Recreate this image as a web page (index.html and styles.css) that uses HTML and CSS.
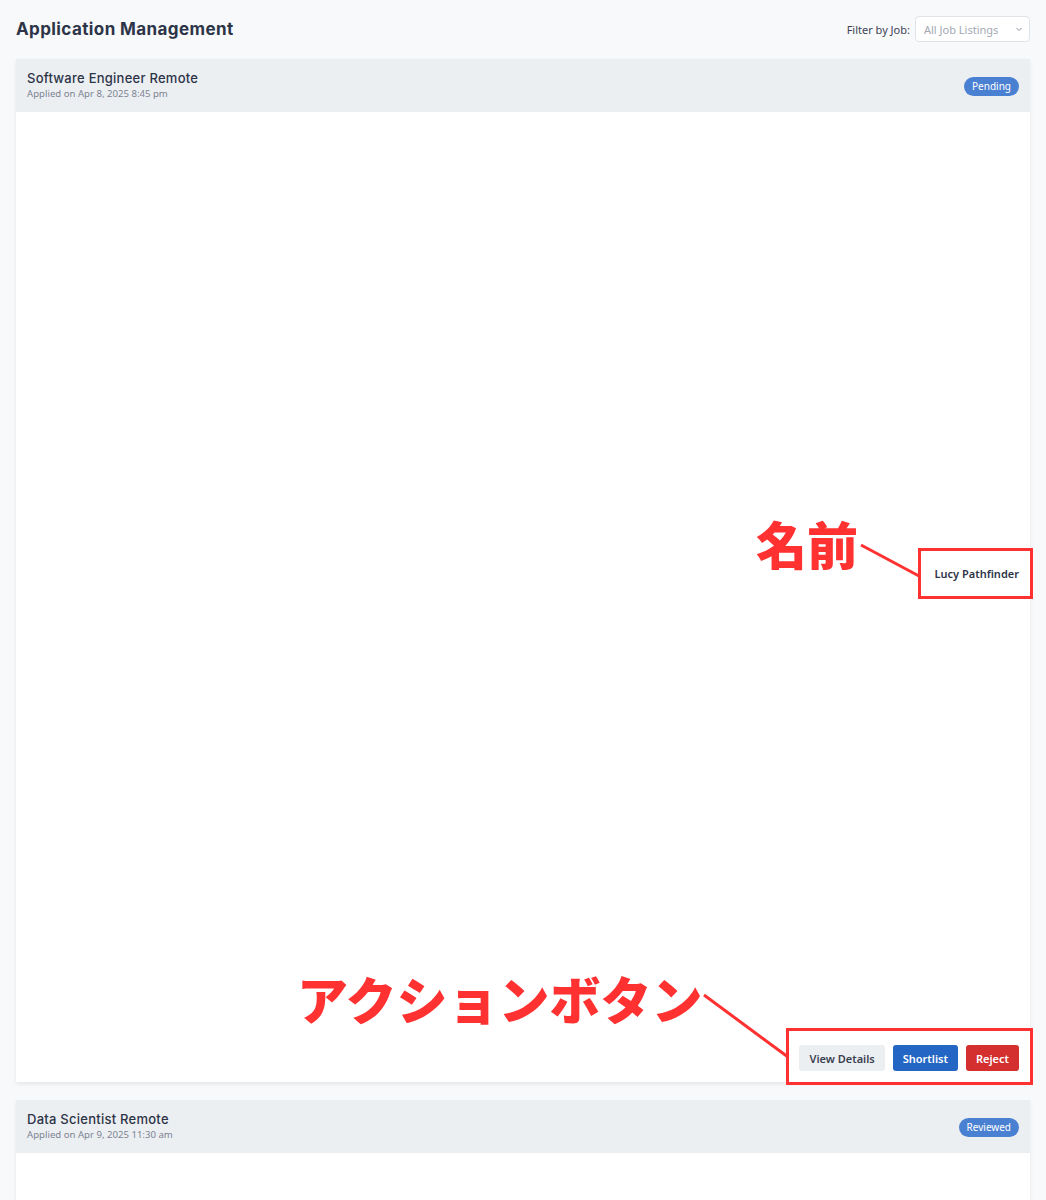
FILE: index.html
```html
<!DOCTYPE html>
<html lang="en">
<head>
    <meta charset="UTF-8">
    <meta name="viewport" content="width=device-width, initial-scale=1.0">
    <title>Application Management</title>
    <link rel="stylesheet" href="styles.css">
</head>
<body>

    <div class="page">
        <div class="top-bar">
            <h1>Application Management</h1>
            <div class="filter">
                <label for="jobFilter">Filter by Job:</label>
                <div class="select-box" id="jobFilter">
                    <span>All Job Listings</span>
                    <svg width="8" height="8" viewBox="0 0 8 8"><path d="M1.5 3l2.5 2.5L6.5 3" fill="none" stroke="#8a909c" stroke-width="1"/></svg>
                </div>
            </div>
        </div>

        <div class="app-card">
            <div class="card-header">
                <div>
                    <div class="job-title">Software Engineer Remote</div>
                    <div class="applied">Applied on Apr 8, 2025 8:45 pm</div>
                </div>
                <span class="badge">Pending</span>
            </div>
            <div class="card-body">
                <div class="applicant">
                    <span class="applicant-name">Lucy Pathfinder</span>
                </div>
                <div class="actions">
                    <button class="btn btn-light">View Details</button>
                    <button class="btn btn-blue">Shortlist</button>
                    <button class="btn btn-red">Reject</button>
                </div>
            </div>
        </div>

        <div class="app-card">
            <div class="card-header">
                <div>
                    <div class="job-title">Data Scientist Remote</div>
                    <div class="applied">Applied on Apr 9, 2025 11:30 am</div>
                </div>
                <span class="badge">Reviewed</span>
            </div>
            <div class="card-body short"></div>
        </div>
    </div>

    <!-- annotations -->
    <div class="note note-name">名前</div>
    <div class="note note-actions">アクションボタン</div>
    <div class="mark mark-name"></div>
    <div class="mark mark-actions"></div>
    <svg class="note-lines" width="1046" height="1200" viewBox="0 0 1046 1200">
        <line x1="861" y1="545" x2="919" y2="576" stroke="#ff3131" stroke-width="3"/>
        <line x1="704" y1="995" x2="788" y2="1057" stroke="#ff3131" stroke-width="3"/>
    </svg>

</body>
</html>
```

FILE: styles.css
```css
body {
    font-family: 'Noto Sans', 'Open Sans', sans-serif;
    background-color: #f8f9fb;
    color: #2d3448;
    margin: 0;
    padding: 0;
}
.page {
    padding: 16px 16px 0;
}
.top-bar {
    display: flex;
    justify-content: space-between;
    align-items: center;
    margin-bottom: 17px;
}
h1 {
    font-family: 'Inter', sans-serif;
    font-size: 17px;
    font-weight: 700;
    letter-spacing: 0.4px;
    margin: 0;
    color: #2d3448;
}
.filter {
    display: flex;
    align-items: center;
    gap: 5px;
}
.filter label {
    font-size: 11px;
    color: #3d4454;
}
.select-box {
    width: 115px;
    height: 26px;
    box-sizing: border-box;
    border: 1px solid #e0e3e8;
    border-radius: 4px;
    background-color: #ffffff;
    display: flex;
    justify-content: space-between;
    align-items: center;
    padding: 0 6px 0 8px;
    font-size: 11px;
    color: #a3a8b2;
}
.app-card {
    background-color: #ffffff;
    box-shadow: 0 2px 4px rgba(0, 0, 0, 0.08);
    margin-bottom: 18px;
}
.card-header {
    background-color: #eceff2;
    display: flex;
    justify-content: space-between;
    align-items: center;
    padding: 12px 11px 11px;
    height: 30px;
}
.job-title {
    font-family: 'Inter', sans-serif;
    font-size: 13px;
    font-weight: 500;
    letter-spacing: 0.25px;
    color: #2d3448;
    line-height: 16px;
}
.applied {
    font-size: 9.6px;
    color: #7c8392;
    line-height: 16px;
}
.badge {
    background-color: #4a80d2;
    color: #ffffff;
    font-size: 10px;
    padding: 2px 8px;
    border-radius: 10px;
    line-height: 15px;
}
.card-body {
    height: 970px;
    box-sizing: border-box;
    padding: 12px 11px 11px;
    display: flex;
    flex-direction: column;
}
.card-body.short {
    height: 60px;
}
.applicant {
    flex: 1;
    display: flex;
    align-items: center;
    justify-content: flex-end;
    margin-bottom: 23px;
}
.applicant-name {
    font-size: 11px;
    font-weight: 600;
    color: #2d3448;
}
.actions {
    display: flex;
    justify-content: flex-end;
    gap: 8px;
}
.btn {
    font-family: 'Noto Sans', sans-serif;
    font-size: 11px;
    font-weight: 600;
    height: 26px;
    padding: 0 10px;
    border: none;
    border-radius: 3px;
}
.btn-light { background-color: #eceff2; color: #3a4150; }
.btn-blue { background-color: #2466c4; color: #ffffff; }
.btn-red { background-color: #d3302f; color: #ffffff; }

.note {
    position: absolute;
    font-family: 'Noto Sans CJK JP', sans-serif;
    font-weight: 900;
    font-size: 51px;
    line-height: 1;
    color: #ff3131;
}
.note-name {
    left: 756px;
    top: 518px;
}
.note-actions {
    left: 297px;
    top: 973px;
}
.mark {
    position: absolute;
    border: 3px solid #ff3131;
}
.mark-name {
    left: 918px;
    top: 548px;
    width: 109px;
    height: 45px;
}
.mark-actions {
    left: 786px;
    top: 1028px;
    width: 241px;
    height: 51px;
}
.note-lines {
    position: absolute;
    left: 0;
    top: 0;
    pointer-events: none;
}
```
